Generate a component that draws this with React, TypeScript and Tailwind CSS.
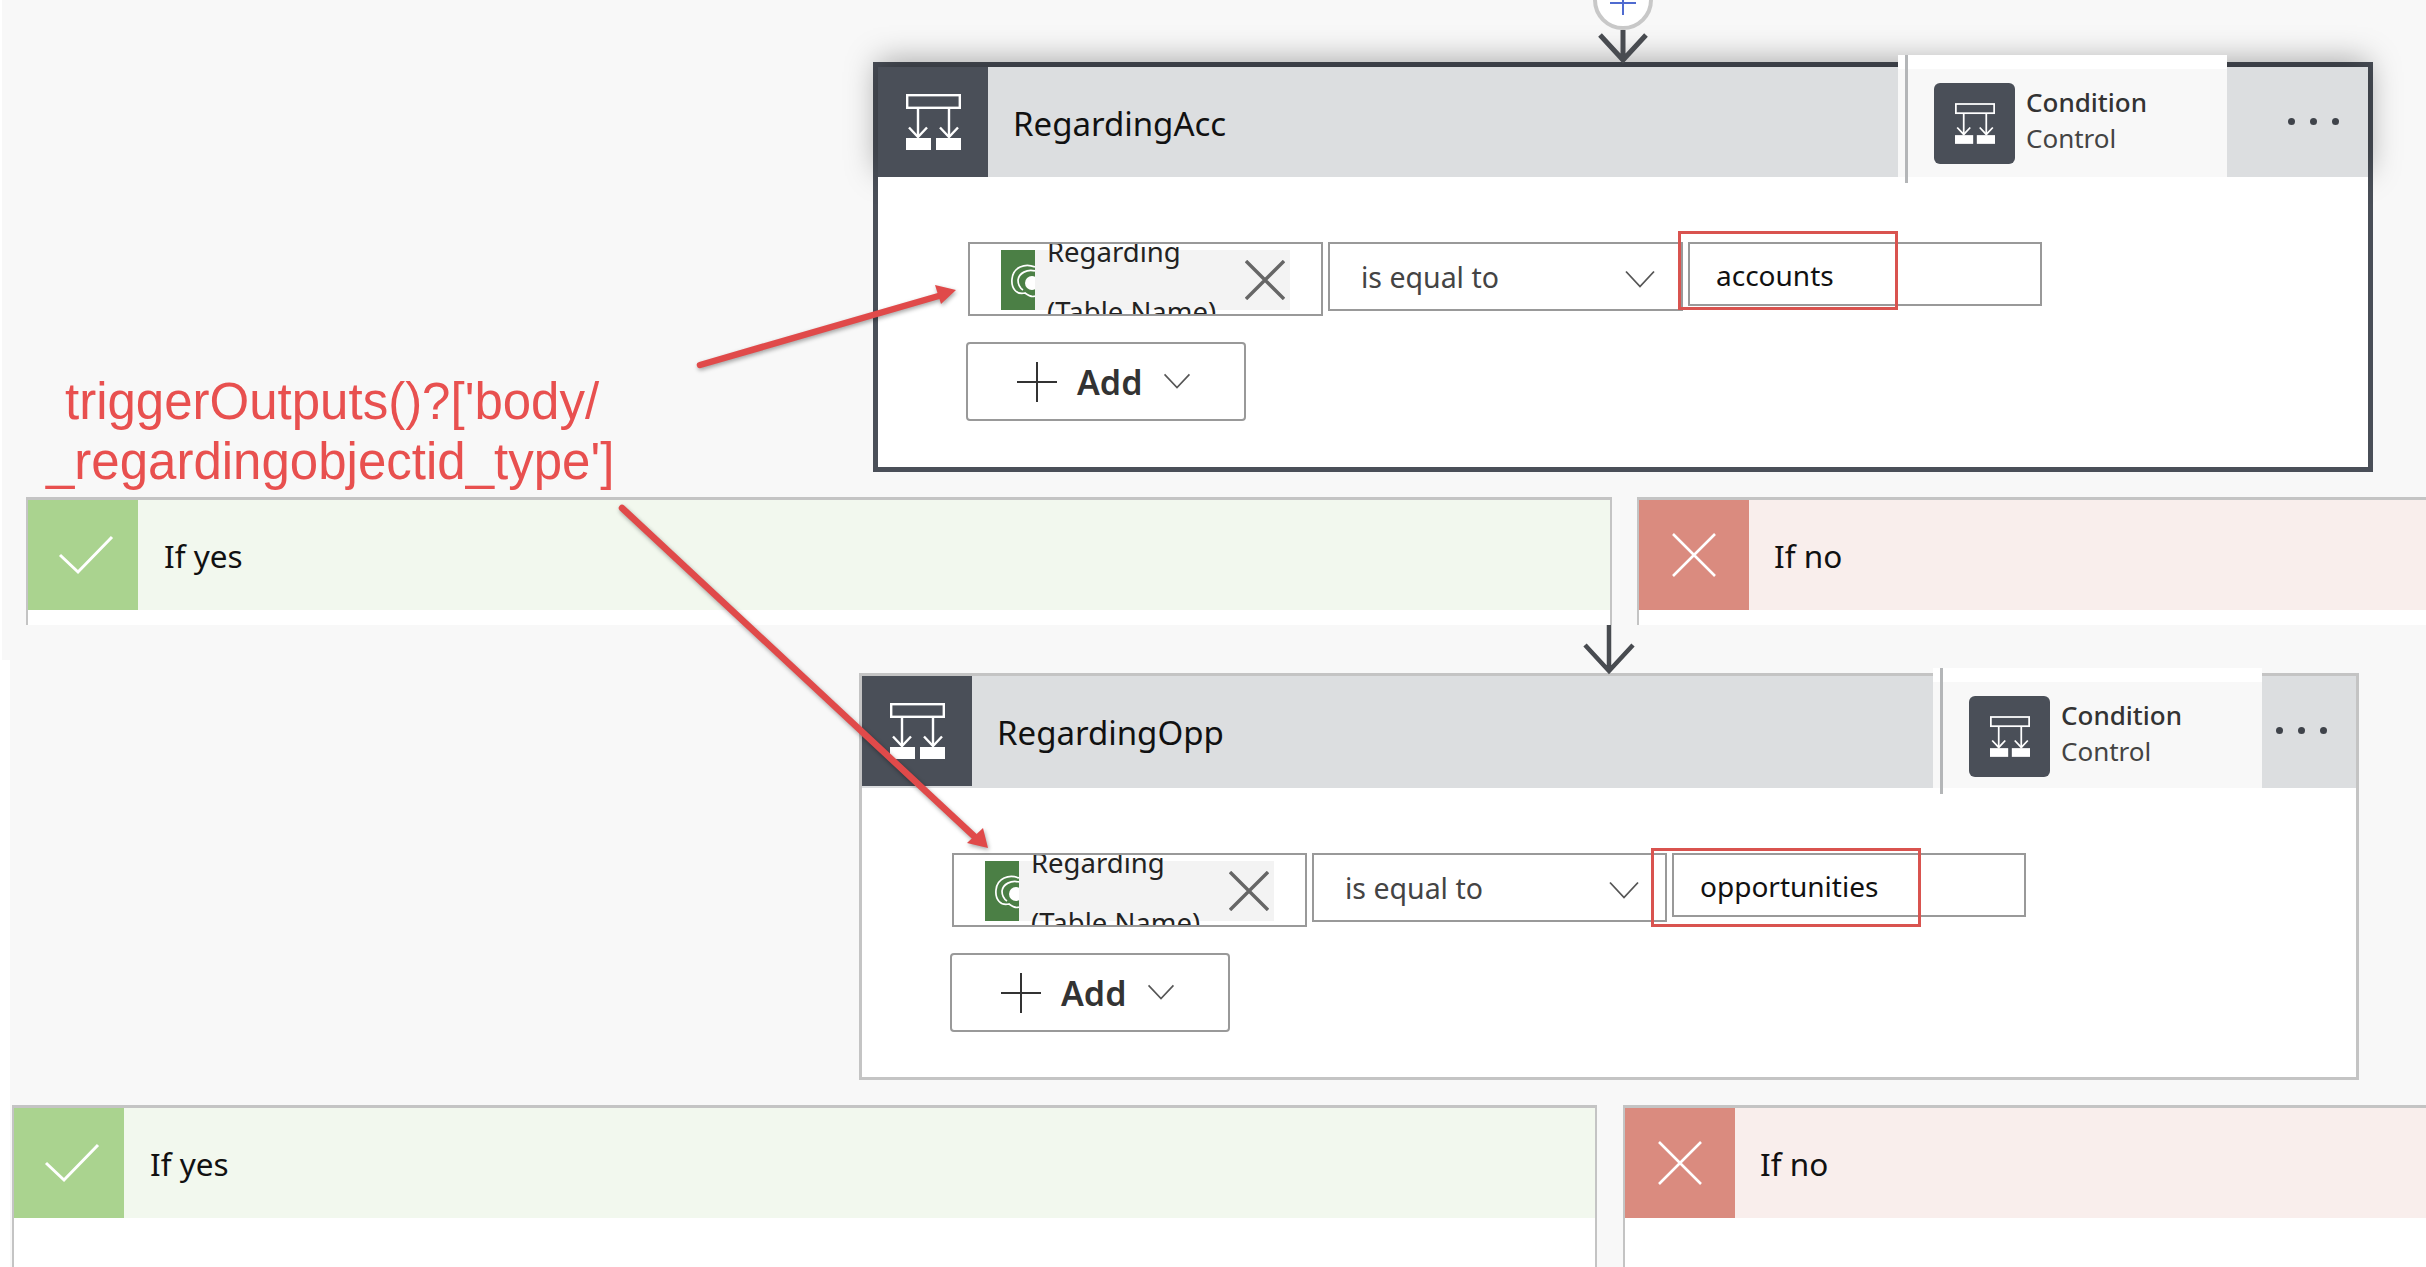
import React from "react";

const font = "font-['Noto_Sans',sans-serif]";

function ConditionIcon({ className }: { className: string }) {
  return (
    <svg viewBox="0 0 55 56" className={className} fill="none" stroke="white" strokeWidth="2.4">
      <rect x="1.2" y="1.2" width="52.6" height="12.6" />
      <path d="M12 14V43M43 14V43" />
      <path d="M3 33.5L12 43L21 33.5M34 33.5L43 43L52 33.5" />
      <rect x="0" y="44" width="25" height="12" fill="white" stroke="none" />
      <rect x="30" y="44" width="25" height="12" fill="white" stroke="none" />
    </svg>
  );
}

function Chevron({ className }: { className: string }) {
  return (
    <svg viewBox="0 0 30 18" className={className} fill="none" stroke="#555" strokeWidth="1.8">
      <path d="M1 1.5L15 16.5L29 1.5" />
    </svg>
  );
}

function DataverseIcon() {
  return (
    <svg viewBox="0 0 34 60" className="w-[34px] h-[60px] shrink-0 bg-[#4b7f45]" fill="none" stroke="white" strokeWidth="1.7">
      <path d="M34 17C24 13 12 17 11 29C10 39 16 45 24 43C28 46 32 47 34 46" />
      <path d="M34 21C26 19 18 23 17 30C17 35 19 38 22 40" />
      <circle cx="31" cy="33" r="7" fill="white" stroke="none" />
    </svg>
  );
}

function ConditionCard({
  title,
  value,
  outerClass,
  headerClass,
  panelClass,
  dotsClass,
}: {
  title: string;
  value: string;
  outerClass: string;
  headerClass: string;
  panelClass: string;
  dotsClass: string;
}) {
  return (
    <div className={`bg-white ${outerClass}`}>
      <div className={`flex bg-[#dcdee0] ${headerClass}`}>
        <div className="w-[110px] h-[110px] shrink-0 bg-[#4a4f58] flex items-center justify-center">
          <ConditionIcon className="w-[55px] h-[56px]" />
        </div>
        <div className="flex-1 pl-[25px] pt-[34px] text-[33px] leading-[46px] text-[#111]">{title}</div>
        <div className={`relative z-10 w-[329px] shrink-0 bg-[#f8f8f8] border-t-[14px] border-white ${panelClass}`}>
          <div className="absolute left-[7px] -top-[14px] -bottom-[6px] w-[3px] bg-[#b4b6b8]"></div>
          <div className="flex pl-[36px] pt-[14px] gap-[11px]">
            <div className="w-[81px] h-[81px] rounded-[6px] bg-[#4a4f58] flex items-center justify-center">
              <ConditionIcon className="w-[40px] h-[41px]" />
            </div>
            <div className="text-[26px] leading-[36px] text-[#333] pt-[1px]">
              <div className="font-medium">Condition</div>
              <div className="text-[#444]">Control</div>
            </div>
          </div>
        </div>
        <div className={`shrink-0 flex gap-[15px] ${dotsClass}`}>
          <div className="w-[7px] h-[7px] rounded-full bg-[#3f434a]"></div>
          <div className="w-[7px] h-[7px] rounded-full bg-[#3f434a]"></div>
          <div className="w-[7px] h-[7px] rounded-full bg-[#3f434a]"></div>
        </div>
      </div>
      {/* body sits above the header shadow */}
      <div className="relative bg-white pl-[90px] pt-[65px] pb-[40px]">
        <div className="flex items-start gap-[5px]">
          <div className="w-[355px] h-[74px] border-2 border-[#999] overflow-hidden flex pl-[31px] pt-[6px] shrink-0">
            <DataverseIcon />
            <div className="w-[255px] h-[60px] bg-[#f3f3f3] flex items-center justify-between pl-[12px] pr-[5px]">
              <div className="text-[27.5px] leading-[60px] text-[#222] whitespace-nowrap pt-[4px]">
                <div>Regarding</div>
                <div>(Table Name)</div>
              </div>
              <svg viewBox="0 0 40 40" className="w-[40px] h-[40px] shrink-0" stroke="#666" strokeWidth="3.4">
                <path d="M1 1L39 39M39 1L1 39" />
              </svg>
            </div>
          </div>
          <div className="w-[355px] h-[69px] border-2 border-[#999] flex items-center justify-between pl-[31px] pr-[26px] pt-[2px] text-[28.5px] text-[#444] shrink-0">
            <span>is equal to</span>
            <Chevron className="w-[30px] h-[18px] mt-[2px]" />
          </div>
          <div className="w-[354px] h-[64px] border-2 border-[#999] flex items-center pl-[26px] pt-[2px] text-[28px] text-[#111] shrink-0">
            {value}
          </div>
        </div>
        <div className="mt-[26px] -ml-[2px] w-[280px] h-[79px] border-2 border-[#999] rounded-[4px] flex items-center pl-[49px]">
          <svg viewBox="0 0 40 40" className="w-[40px] h-[40px] shrink-0" stroke="#333" strokeWidth="2">
            <path d="M20 0V40M0 20H40" />
          </svg>
          <span className="ml-[20px] pt-[2px] text-[34px] font-semibold text-[#333]">Add</span>
          <Chevron className="w-[28px] h-[16px] ml-[21px] -mt-[2px]" />
        </div>
      </div>
    </div>
  );
}

function Branch({ label, yes, className }: { label: string; yes: boolean; className: string }) {
  return (
    <div className={`bg-white border-t-[3px] border-l-2 border-[#c4c4c4] ${className}`}>
      <div className={`flex items-center h-[110px] ${yes ? "bg-[#f2f8ee]" : "bg-[#f9eeec]"}`}>
        <div className={`w-[110px] h-[110px] shrink-0 flex items-center justify-center ${yes ? "bg-[#aad38f] pl-[6px]" : "bg-[#da8b7f]"}`}>
          {yes ? (
            <svg viewBox="0 0 56 40" className="w-[56px] h-[40px]" fill="none" stroke="white" strokeWidth="3">
              <path d="M2 20L20 37L54 2" />
            </svg>
          ) : (
            <svg viewBox="0 0 44 44" className="w-[44px] h-[44px]" fill="none" stroke="white" strokeWidth="2.6">
              <path d="M1 1L43 43M43 1L1 43" />
            </svg>
          )}
        </div>
        <div className={`pt-[2px] text-[31.5px] text-[#111] ${yes ? "pl-[26px]" : "pl-[25px]"}`}>{label}</div>
      </div>
    </div>
  );
}

export default function App() {
  return (
    <div className={`relative w-[2426px] h-[1267px] overflow-hidden bg-white ${font}`}>
      <div className="ml-[2px] h-[660px] bg-[#f8f8f8] pt-[62px]">
        <ConditionCard
          title="RegardingAcc"
          value="accounts"
          outerClass="ml-[871px] w-[1500px] h-[410px] border-[5px] border-[#4a4f58]"
          headerClass="shadow-[0_-6px_30px_rgba(0,0,0,0.35)]"
          panelClass="-mt-[12px]"
          dotsClass="w-[141px] pl-[61px] pt-[51px]"
        />
        <div className="flex gap-[25px] ml-[24px] mt-[25px]">
          <Branch label="If yes" yes className="w-[1586px] h-[128px] border-r-2" />
          <Branch label="If no" yes={false} className="flex-1 h-[128px]" />
        </div>
      </div>

      <div className="ml-[10px] h-[607px] bg-[#f8f8f8] pt-[13px]">
        <ConditionCard
          title="RegardingOpp"
          value="opportunities"
          outerClass="ml-[849px] w-[1500px] h-[407px] border-[3px] border-[#c4c4c4]"
          headerClass="h-[112px]"
          panelClass="-mt-[8px]"
          dotsClass="w-[94px] pl-[14px] pt-[51px]"
        />
        <div className="flex gap-[26px] ml-[2px] mt-[25px]">
          <Branch label="If yes" yes className="w-[1585px] h-[170px] border-r-2" />
          <Branch label="If no" yes={false} className="flex-1 h-[170px]" />
        </div>
      </div>

      {/* connectors over the page */}
      <svg className="absolute left-0 top-0 w-[2426px] h-[1267px] pointer-events-none" viewBox="0 0 2426 1267" fill="none">
        <circle cx="1623" cy="0" r="28" fill="white" stroke="#c8c8c8" strokeWidth="4" />
        <path d="M1623 -8V15M1610 3H1636" stroke="#4f6bd0" strokeWidth="2" />
        <path d="M1623 30V60M1600 35L1623 60L1646 35" stroke="#484b50" strokeWidth="5" />
        <path d="M1609 625V670M1585 645L1609 671L1633 645" stroke="#484b50" strokeWidth="4.5" />
      </svg>

      {/* red callouts added on top of the screenshot */}
      <div className="absolute left-[1678px] top-[231px] w-[220px] h-[79px] border-[3px] border-[#d9534f]"></div>
      <div className="absolute left-[1651px] top-[848px] w-[270px] h-[79px] border-[3px] border-[#d9534f]"></div>
      <svg className="absolute left-0 top-0 w-[2426px] h-[1267px] pointer-events-none drop-shadow-[1px_2px_2px_rgba(0,0,0,0.35)]" viewBox="0 0 2426 1267" fill="none">
        <path d="M700 365L942 295" stroke="#e04a4a" strokeWidth="6.5" strokeLinecap="round" />
        <path d="M956 290L935 285L941 304Z" fill="#e04a4a" />
        <path d="M622 508L976 838" stroke="#e04a4a" strokeWidth="6.5" strokeLinecap="round" />
        <path d="M988 848L967 843L983 828Z" fill="#e04a4a" />
      </svg>
      <div className="absolute left-[46px] top-[372px] w-[600px] text-[51px] leading-[60px] text-[#e8504f] font-['Liberation_Sans',sans-serif] whitespace-nowrap">
        <div className="pl-[19px]">triggerOutputs()?['body/</div>
        <div>_regardingobjectid_type']</div>
      </div>
    </div>
  );
}
